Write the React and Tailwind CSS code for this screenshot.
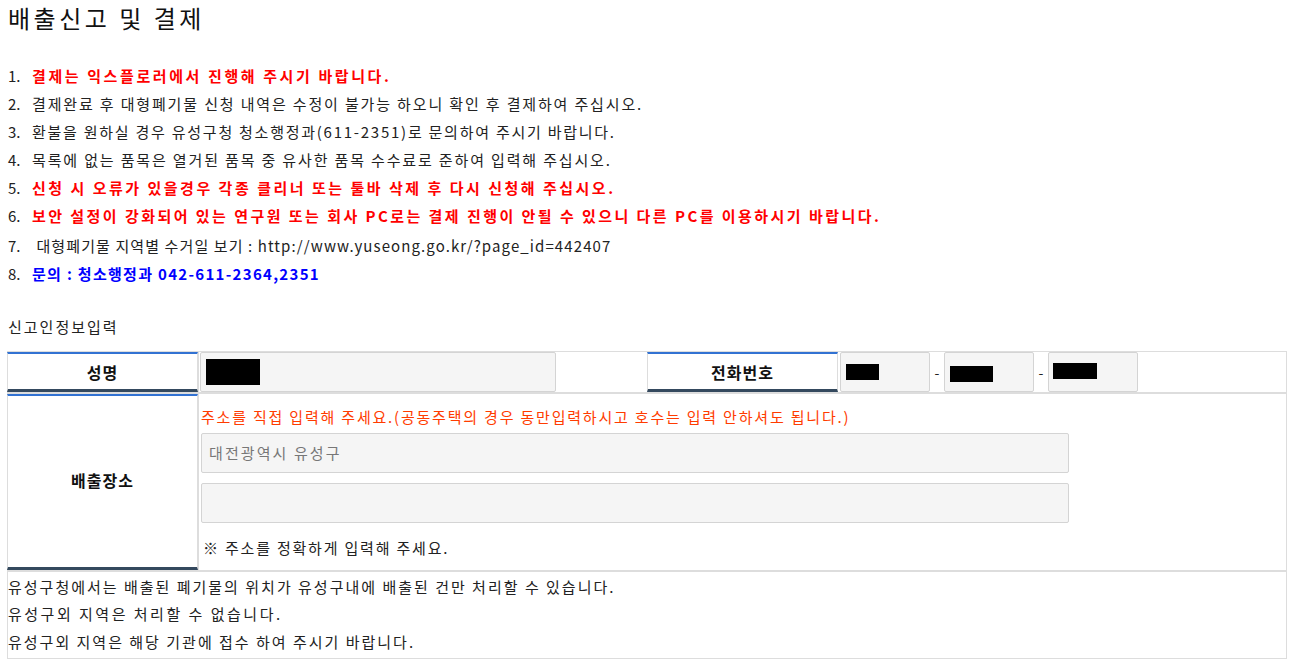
export default function App() {
  const notices = [
    { n: "1.", text: "결제는 익스플로러에서 진행해 주시기 바랍니다.", cls: "text-[#ff0000] font-bold tracking-[2.6px]" },
    { n: "2.", text: "결제완료 후 대형폐기물 신청 내역은 수정이 불가능 하오니 확인 후 결제하여 주십시오.", cls: "text-[#222] tracking-[1.85px]" },
    { n: "3.", text: "환불을 원하실 경우 유성구청 청소행정과(611-2351)로 문의하여 주시기 바랍니다.", cls: "text-[#222] tracking-[1.75px]" },
    { n: "4.", text: "목록에 없는 품목은 열거된 품목 중 유사한 품목 수수료로 준하여 입력해 주십시오.", cls: "text-[#222] tracking-[1.85px]" },
    { n: "5.", text: "신청 시 오류가 있을경우 각종 클리너 또는 툴바 삭제 후 다시 신청해 주십시오.", cls: "text-[#ff0000] font-bold tracking-[2.5px]" },
    { n: "6.", text: "보안 설정이 강화되어 있는 연구원 또는 회사 PC로는 결제 진행이 안될 수 있으니 다른 PC를 이용하시기 바랍니다.", cls: "text-[#ff0000] font-bold tracking-[2.45px]" },
    { n: "7.", text: "\u00a0대형폐기물 지역별 수거일 보기 : http://www.yuseong.go.kr/?page_id=442407", cls: "text-[#222] tracking-[1.1px]" },
    { n: "8.", text: "문의 : 청소행정과 042-611-2364,2351", cls: "text-[#0000ff] font-bold tracking-[1.3px]" },
  ];

  const label =
    "w-[191px] shrink-0 flex items-center justify-center font-bold text-[16px] tracking-[1px] text-[#111] border-t-2 border-t-[#3272d2] border-b-[3px] border-b-[#34495e] border-x border-x-[#ddd]";
  const input = "bg-[#f5f5f5] border border-[#d4d4d4] rounded-[2px]";

  return (
    <div className="min-h-screen bg-white text-[#222] font-['Noto_Sans_CJK_KR','Noto_Sans',sans-serif]">
      <div className="pl-[7px] pr-[6px]">
        {/* 제목 */}
        <h2 className="pl-px h-[36px] leading-[36px] text-[24px] tracking-[3.5px] text-[#111]">
          배출신고 및 결제
        </h2>

        {/* 안내사항 */}
        <ul className="mt-[26px] pl-px">
          {notices.map((it) => (
            <li
              key={it.n}
              className={`flex h-[28px] items-center text-[15px] ${it.n === "7." ? "mt-[2px]" : ""}`}
            >
              <span className="w-[24px] text-[#222]">{it.n}</span>
              <span className={it.cls}>{it.text}</span>
            </li>
          ))}
        </ul>

        <p className="mt-[28px] pl-px h-[22px] leading-[22px] text-[15px] tracking-[2px] text-[#222]">
          신고인정보입력
        </p>

        {/* 입력 테이블 */}
        <div className="mt-[13px] border-r border-r-[#ddd]">
          {/* 성명 / 전화번호 */}
          <div className="flex h-[43px] border-t border-t-[#ddd] border-b-2 border-b-[#ddd]">
            <div className={label}>성명</div>
            <div className="w-[449px] flex pl-[1px] border-l border-l-[#ddd]">
              <div className={`${input} w-[356px] h-full flex items-center pl-[5px]`}>
                <div className="w-[54px] h-[26px] bg-black" />
              </div>
            </div>
            <div className={label}>전화번호</div>
            <div className="flex items-stretch">
              <div className={`${input} w-[90px] flex items-center pl-[5px] ml-[2px]`}>
                <div className="w-[33px] h-[16px] bg-black" />
              </div>
              <span className="w-[14px] text-center self-center text-[14px]">-</span>
              <div className={`${input} w-[90px] flex items-center pl-[5px]`}>
                <div className="w-[43px] h-[16px] bg-black mt-[3px]" />
              </div>
              <span className="w-[14px] text-center self-center text-[14px]">-</span>
              <div className={`${input} w-[90px] flex items-center pl-[4px]`}>
                <div className="w-[44px] h-[16px] bg-black -mt-[2px]" />
              </div>
            </div>
          </div>

          {/* 배출장소 */}
          <div className="flex h-[178px] border-b-2 border-b-[#ddd]">
            <div className={`${label} pb-[4px]`}>배출장소</div>
            <div className="flex-1 pl-[2px] border-l border-l-[#ddd]">
              <p className="mt-[12px] h-[22px] leading-[22px] text-[15px] tracking-[1.8px] text-[#ff3c00]">
                주소를 직접 입력해 주세요.(공동주택의 경우 동만입력하시고 호수는 입력 안하셔도 됩니다.)
              </p>
              <div className={`${input} mt-[5px] w-[868px] h-[40px] flex items-center pl-[7px] text-[15px] tracking-[2.1px] text-[#777]`}>
                대전광역시 유성구
              </div>
              <div className={`${input} mt-[10px] w-[868px] h-[40px]`} />
              <p className="mt-[14px] pl-[2px] h-[22px] leading-[22px] text-[15px] tracking-[1.8px] text-[#222]">
                ※ 주소를 정확하게 입력해 주세요.
              </p>
            </div>
          </div>

          {/* 처리 안내 */}
          <div className="border-l border-l-[#ddd] border-b border-b-[#ddd] pt-[1px] pb-[3px] text-[15px] tracking-[2px] text-[#222]">
            <p className="h-[27px] leading-[27px]">유성구청에서는 배출된 폐기물의 위치가 유성구내에 배출된 건만 처리할 수 있습니다.</p>
            <p className="h-[28px] leading-[28px] tracking-[2.5px]">유성구외 지역은 처리할 수 없습니다.</p>
            <p className="h-[27px] leading-[27px]">유성구외 지역은 해당 기관에 접수 하여 주시기 바랍니다.</p>
          </div>
        </div>
      </div>
    </div>
  );
}
